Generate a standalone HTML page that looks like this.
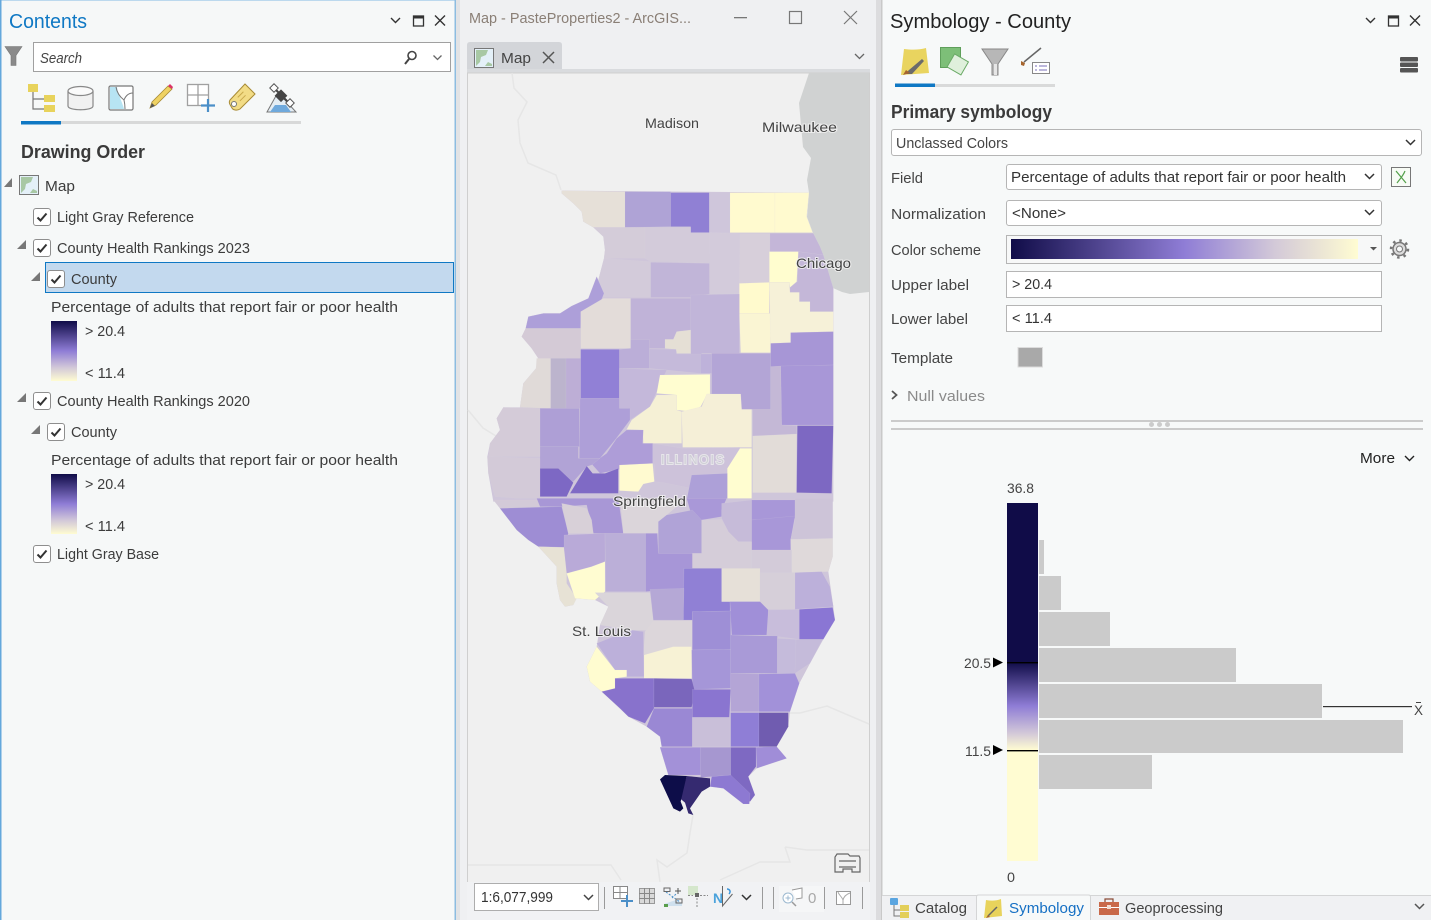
<!DOCTYPE html>
<html><head><meta charset="utf-8"><title>Symbology</title>
<style>
html,body{margin:0;padding:0;background:#f6f8f8;overflow:hidden}
svg{display:block}
text{font-family:"Liberation Sans",sans-serif;font-size:14.5px;fill:#444}
.t text,text.t{fill:#3c3c3c}
.m text{fill:#444;font-size:14px;paint-order:stroke;stroke:#f2f2f2;stroke-width:2px;stroke-opacity:.8}
.c polygon{stroke:#dcd9e2;stroke-width:1;stroke-opacity:.3}
</style></head><body>
<svg xmlns="http://www.w3.org/2000/svg" width="1431" height="920" viewBox="0 0 1431 920">
<defs>
<filter id="soft" x="-2%" y="-2%" width="104%" height="104%"><feGaussianBlur stdDeviation="1"/></filter>
<linearGradient id="lg" x1="0" y1="0" x2="0" y2="1"><stop offset="0" stop-color="#100c48"/><stop offset=".5" stop-color="#8f7dd6"/><stop offset=".78" stop-color="#d3c9d8"/><stop offset="1" stop-color="#fffcd2"/></linearGradient>
<linearGradient id="hg" x1="0" y1="0" x2="1" y2="0"><stop offset="0" stop-color="#100c48"/><stop offset=".5" stop-color="#8f7dd6"/><stop offset=".76" stop-color="#d3c9d8"/><stop offset="1" stop-color="#fffcd2"/></linearGradient>
<g id="cb"><rect x=".5" y=".5" width="17" height="17" rx="2.500" fill="#fff" stroke="#8e8e8e"/><path d="M4.500 9.500l3 3 6-7" fill="none" stroke="#333" stroke-width="2"/></g>
<g id="mapic"><rect x=".5" y=".5" width="19" height="19" fill="#e4f0f8" stroke="#777"/><path d="M2 2h12l-2 5-5 2-1 5-4 4z" fill="#a8c8a4"/><path d="M11 18l3-4 4 2v2z" fill="#a8c8a4"/></g>
</defs>

<!-- backgrounds -->
<rect width="1431" height="920" fill="#f6f8f8"/>
<rect x="456" y="0" width="425" height="920" fill="#eff0f2"/>
<rect x="456" width="4" height="920" fill="#e2e3e5"/>
<rect x="876" width="5" height="920" fill="#dcdcde"/>
<rect x="0" y="0" width="456" height="1" fill="#bcd9ee"/>
<rect x="0" y="0" width="1.500" height="920" fill="#64a8dc"/>
<rect x="454.500" y="0" width="1.500" height="920" fill="#8cbce0"/>

<!-- CONTENTS PANE -->
<text x="9" y="28" style="font-size:20px;fill:#0f78c4" textLength="78" lengthAdjust="spacingAndGlyphs">Contents</text>
<path d="M391 18l4.500 4.500 4.500-4.500" fill="none" stroke="#333" stroke-width="1.400"/>
<rect x="413.500" y="16" width="10" height="10" fill="none" stroke="#333" stroke-width="1.300"/><rect x="413" y="15.500" width="11" height="3" fill="#333"/>
<path d="M435 15.500l10 10M445 15.500l-10 10" stroke="#333" stroke-width="1.400"/>
<path d="M5 46.500h17l-6 9v10h-5v-10z" fill="#8a8a8a" stroke="#777" stroke-width=".6"/>
<rect x="33.500" y="42.500" width="417" height="29" fill="#fff" stroke="#a0a0a0"/>
<text x="40" y="63" style="font-size:15px;font-style:italic" textLength="42" lengthAdjust="spacingAndGlyphs">Search</text>
<circle cx="412" cy="55.500" r="4" fill="none" stroke="#444" stroke-width="1.600"/><path d="M409 59l-4 5" stroke="#444" stroke-width="2"/>
<path d="M433.500 55.500l4 4 4-4" fill="none" stroke="#666" stroke-width="1.300"/>
<!-- contents tab icons -->
<rect x="28" y="84" width="10" height="8" fill="#e8d35c"/><rect x="44" y="95" width="11" height="7" fill="#e8d35c"/><rect x="44" y="105" width="11" height="7" fill="#e8d35c"/>
<path d="M33 92v17h11M33 99h11" fill="none" stroke="#777" stroke-width="1.200"/>
<path d="M68 91v15c0 5 25 5 25 0V91" fill="#f1f1f1" stroke="#888" stroke-width="1.200"/><ellipse cx="80.500" cy="91" rx="12.500" ry="4.500" fill="#fafafa" stroke="#888" stroke-width="1.200"/>
<rect x="109" y="86" width="24" height="24" rx="1.500" fill="#fff" stroke="#777" stroke-width="1.200"/><path d="M110 87h7c1 8 5 14 7 22h-14z" fill="#b7e4f3"/><path d="M116 87c1 6 4 10 8 13 1 4 1 6 1 9M133 93c-4 0-7 2-9 7" fill="none" stroke="#777"/>
<path d="M150 108l2-6 16-16 4 3-16 16z" fill="#efd263" stroke="#a88b35" stroke-width=".8"/><path d="M168 86l4 3 1-2-3-3z" fill="#d36"/><path d="M150 108l2-5 3 3z" fill="#555"/>
<rect x="187.500" y="84.500" width="21" height="21" fill="#fff" stroke="#a0a0a0" stroke-width="1.300"/><path d="M198 85v20M188 95h20" stroke="#a0a0a0" stroke-width="1.300"/><path d="M208 99v13M201 105.500h14" stroke="#4b8fc8" stroke-width="2.200"/>
<path d="M230 100l15-16 10 10-15 15c-3 2-7 1-8-1s-4-5-2-8z" fill="#f2dc86" stroke="#a88b35"/><circle cx="234" cy="104" r="2.500" fill="#fff" stroke="#777"/><path d="M238 94l8 0M237 98l8 0" stroke="#c9a94c" transform="rotate(-45 242 96)"/>
<path d="M267 112l10-18 8 6 11 12z" fill="#e4edf4" stroke="#777"/><path d="M270 112l5-7h11l5 7z" fill="#6fa9dc"/><path d="M272 86l20 20" stroke="#444" stroke-width="2"/><rect x="277" y="91" width="9" height="9" fill="#444" transform="rotate(45 281 95)"/><rect x="271" y="85" width="6" height="6" fill="#fff" stroke="#555" transform="rotate(45 274 88)"/><rect x="287" y="100" width="6" height="6" fill="#fff" stroke="#555" transform="rotate(45 290 103)"/>
<rect x="21" y="121" width="280" height="3" fill="#d8d9d9"/><rect x="21" y="121" width="40" height="3.500" fill="#0f78c4"/>

<g class="t">
<text x="21" y="158" style="font-size:18px;font-weight:bold;fill:#3a3a3a" textLength="124" lengthAdjust="spacingAndGlyphs">Drawing Order</text>
<text x="45" y="191" textLength="30" lengthAdjust="spacingAndGlyphs">Map</text>
<text x="57" y="222" textLength="137" lengthAdjust="spacingAndGlyphs">Light Gray Reference</text>
<text x="57" y="253" textLength="193" lengthAdjust="spacingAndGlyphs">County Health Rankings 2023</text>
</g>
<path d="M12 178v9H4z" fill="#777"/>
<use href="#mapic" x="19" y="175"/>
<use href="#cb" x="33" y="208"/>
<path d="M26 240v9h-9z" fill="#777"/>
<use href="#cb" x="33" y="239"/>
<rect x="45.500" y="262.500" width="408" height="30" fill="#c3d9ee" stroke="#0f78c4"/>
<path d="M40 272v9h-9z" fill="#777"/>
<use href="#cb" x="47" y="270"/>
<g class="t">
<text x="71" y="284" textLength="46" lengthAdjust="spacingAndGlyphs">County</text>
<text x="51" y="312" textLength="347" lengthAdjust="spacingAndGlyphs">Percentage of adults that report fair or poor health</text>
<text x="85" y="336" textLength="40" lengthAdjust="spacingAndGlyphs">&gt; 20.4</text>
<text x="85" y="378" textLength="40" lengthAdjust="spacingAndGlyphs">&lt; 11.4</text>
<text x="57" y="406" textLength="193" lengthAdjust="spacingAndGlyphs">County Health Rankings 2020</text>
<text x="71" y="437" textLength="46" lengthAdjust="spacingAndGlyphs">County</text>
<text x="51" y="465" textLength="347" lengthAdjust="spacingAndGlyphs">Percentage of adults that report fair or poor health</text>
<text x="85" y="489" textLength="40" lengthAdjust="spacingAndGlyphs">&gt; 20.4</text>
<text x="85" y="531" textLength="40" lengthAdjust="spacingAndGlyphs">&lt; 11.4</text>
<text x="57" y="559" textLength="102" lengthAdjust="spacingAndGlyphs">Light Gray Base</text>
</g>
<rect x="51" y="321" width="26" height="60" fill="url(#lg)"/>
<rect x="51" y="474" width="26" height="60" fill="url(#lg)"/>
<path d="M26 393v9h-9z" fill="#777"/><use href="#cb" x="33" y="392"/>
<path d="M40 425v9h-9z" fill="#777"/><use href="#cb" x="47" y="423"/>
<use href="#cb" x="33" y="545"/>

<!-- MAP PANE HEADER -->
<text x="469" y="23" style="fill:#8a7f76" textLength="222" lengthAdjust="spacingAndGlyphs">Map - PasteProperties2 - ArcGIS...</text>
<rect x="734" y="17" width="13" height="1.300" fill="#777"/>
<rect x="789.500" y="11.500" width="12" height="12" fill="none" stroke="#777" stroke-width="1.200"/>
<path d="M844 11l13 13M857 11l-13 13" stroke="#777" stroke-width="1.200"/>
<path d="M467 45q0-3 3-3h89q3 0 3 3v24h-95z" fill="#d3d5d9"/>
<use href="#mapic" x="474" y="48"/>
<text x="501" y="63" style="font-size:15px" textLength="30" lengthAdjust="spacingAndGlyphs">Map</text>
<path d="M543 52l11 11M554 52l-11 11" stroke="#555" stroke-width="1.500"/>
<path d="M855 54l4.500 4.500 4.500-4.500" fill="none" stroke="#666" stroke-width="1.300"/>
<rect x="467" y="69" width="403" height="4" fill="#d9dbde"/>

<!-- MAP -->
<rect x="467.500" y="73" width="402" height="812" fill="#f0f0f0" stroke="#cfcfcf"/>
<polygon points="809,73 799,103 803,147 811,158 807,180 809,193 807,217 813,233 823,257 833,288 842,292 850,294 869,292 869,73" fill="#d0d2d2"/>
<g fill="none" stroke="#e6e6e6" stroke-width="1.500">
<path d="M512 73l2 15 13 14-9 18 2 23 8 20 28 12 5 15"/>
<path d="M468 410l15 18 13 8"/>
<path d="M693 815l-3 18-3 20-20 14-10-7 3 22"/>
<path d="M468 865h143l10 15M785 847l5 15-30 0-40 18"/><path d="M785 847l22 3h62"/>
<path d="M788 713h12l27-7 42 18"/>
</g>
<!-- counties -->
<g class="c" filter="url(#soft)" transform="translate(460,180) scale(.33333)">
<polygon fill="#cfc6da" style="stroke:none" points="305,32 1047,38 1040,110 1058,158 1090,225 1120,325 1120,965 100,965 85,880 82,830 90,790 120,750 110,715 130,682 180,682 190,610 228,565 235,535 215,505 185,470 197,445 205,410 250,400 300,400 335,378 385,355 410,290 415,300 432,235 435,210 430,170 400,142 370,125 365,95 340,70 305,40"/>
<polygon fill="#e6e0d8" points="305,32 495,35 495,142 400,142 370,125 365,95 340,70 305,40"/>
<polygon fill="#afa3d6" points="495,35 632,35 632,140 495,142"/>
<polygon fill="#9080d4" points="632,38 748,38 748,158 692,158 692,140 632,140"/>
<polygon fill="#cfc6db" points="748,38 810,38 810,158 748,158"/>
<polygon fill="#fffacf" points="810,38 945,38 945,158 810,158"/>
<polygon fill="#fffacf" points="945,38 1047,38 1040,110 1058,158 945,158"/>
<polygon fill="#d4ccd9" points="400,142 555,142 555,235 432,235 435,210 430,170"/>
<polygon fill="#d3cbda" points="555,142 692,142 692,158 748,158 748,250 625,245 572,245 555,235"/>
<polygon fill="#d3cbdb" points="748,158 840,160 838,342 750,342"/>
<polygon fill="#d7cfda" points="840,160 930,160 928,308 838,310"/>
<polygon fill="#c4b6d8" points="930,160 1060,160 1080,200 1090,225 1015,215 930,215"/>
<polygon fill="#c4b7d8" points="1015,215 1090,225 1120,325 1120,395 1050,395 1050,365 1018,365 1018,337 990,337 990,322 1012,305"/>
<polygon fill="#fffdcf" points="928,215 1015,215 1010,305 990,322 988,307 928,307"/>
<polygon fill="#d3cbda" points="432,235 572,245 572,352 430,352 415,300"/>
<polygon fill="#ad9fd9" points="410,290 432,340 420,370 365,395 362,445 197,445 205,410 250,400 300,400 335,378 385,355"/>
<polygon fill="#c1b5d8" points="572,247 748,250 748,342 692,352 572,352"/>
<polygon fill="#fffacd" points="838,310 928,307 928,400 838,400"/>
<polygon fill="#faf5d3" points="838,400 932,400 932,518 842,518"/>
<polygon fill="#f6f1d8" points="928,307 988,307 990,337 1018,337 1018,365 1050,365 1050,395 1120,395 1120,455 992,458 992,488 932,490"/>
<polygon fill="#e3dcd9" points="362,395 430,355 512,355 512,505 362,505"/>
<polygon fill="#d4cad6" points="185,470 197,445 362,445 362,535 235,535 215,505"/>
<polygon fill="#c0b3d8" points="512,355 692,355 692,450 650,455 640,478 615,478 615,505 568,505 568,478 512,478"/>
<polygon fill="#c1b5d9" points="692,345 838,342 838,520 755,520 725,520 725,580 692,520"/>
<polygon fill="#e5dfd5" points="640,478 650,455 692,450 692,520 650,520 648,508 615,505 615,478"/>
<polygon fill="#bbaed8" points="512,478 568,478 568,565 478,565 478,508 512,505"/>
<polygon fill="#c5bada" points="568,507 648,508 650,522 722,522 722,580 620,570 568,565"/>
<polygon fill="#beb2da" points="722,522 755,522 755,580 722,580"/>
<polygon fill="#b3a5d6" points="755,520 932,520 932,688 845,688 842,642 755,642"/>
<polygon fill="#a796d6" points="932,490 992,488 992,458 1120,455 1120,555 1000,558 932,560"/>
<polygon fill="#e0dad8" points="230,535 272,535 272,685 180,682 190,610 228,565"/>
<polygon fill="#bcb4cd" points="272,535 318,535 318,685 272,685"/>
<polygon fill="#bdaed6" points="318,535 362,535 362,685 318,685"/>
<polygon fill="#9180d6" points="362,508 478,508 478,655 362,655"/>
<polygon fill="#c4b8da" points="478,565 620,570 570,680 510,720 505,685 478,685"/>
<polygon fill="#f5f0d5" points="590,645 650,645 650,690 665,695 665,790 550,790 548,750 500,748 515,720 570,680"/>
<polygon fill="#fffdd0" points="600,585 750,583 750,642 742,642 722,680 695,695 650,690 650,645 590,640"/>
<polygon fill="#f5efd7" points="665,695 725,680 740,642 842,642 845,688 875,688 875,802 668,802"/>
<polygon fill="#a897d7" points="962,558 1120,555 1120,735 965,735"/>
<polygon fill="#c4b8d6" points="932,560 962,558 965,735 1010,737 1010,762 878,768 878,688 932,688"/>
<polygon fill="#7d68c2" points="1012,737 1120,737 1118,815 1115,940 1010,938"/>
<polygon fill="#e2dcd8" points="878,768 1010,762 1008,938 878,938"/>
<polygon fill="#cdc2da" points="578,790 668,805 840,802 815,865 802,865 802,880 695,885 695,925 610,908 585,905 585,855 578,850"/>
<polygon fill="#fffdd0" points="802,865 840,805 875,805 875,960 802,960"/>
<polygon fill="#ada0d8" points="695,885 802,880 802,960 680,960"/>
<polygon fill="#fffad0" points="478,855 578,850 583,905 550,912 535,935 478,932"/>
<polygon fill="#ae9dd8" points="550,750 548,790 578,790 578,850 478,855 478,868 420,880 395,852 440,820 470,775 500,750"/>
<polygon fill="#ae9fd8" points="360,655 478,655 478,685 510,685 510,720 465,780 420,835 358,835"/>
<polygon fill="#ae9fd6" points="240,685 358,685 358,800 240,800"/>
<polygon fill="#b1a3d6" points="240,800 355,800 355,835 420,835 395,855 380,860 340,905 330,905 295,865 240,865"/>
<polygon fill="#7d68c4" points="240,865 295,865 340,908 320,950 240,950"/>
<polygon fill="#7f6bc5" points="330,940 380,858 398,880 435,880 475,865 475,940"/>
<polygon fill="#d4cbd8" points="130,682 240,685 240,830 85,830 90,790 120,750 110,715"/>
<polygon fill="#d3cad8" points="82,830 240,835 240,960 105,950 85,880"/>
</g>
<g class="c" filter="url(#soft)" transform="translate(460,500) scale(.33333)">
<polygon fill="#cfc6da" style="stroke:none" points="100,-5 1118,-5 1118,170 1105,215 1120,320 1125,360 1090,418 1050,490 1018,550 990,635 985,680 950,740 980,775 890,805 865,830 885,885 870,905 850,912 790,865 750,860 750,835 680,828 615,825 625,825 600,742 605,740 600,710 560,680 505,650 425,575 390,545 380,500 410,440 420,375 445,320 405,300 345,295 340,315 315,320 300,300 290,250 290,200 235,140 205,120 170,90 120,25"/>
<polygon fill="#d3cad8" points="100,0 240,0 240,20 120,25"/>
<polygon fill="#9e8dd4" points="120,25 305,20 325,100 312,142 235,140 205,120 170,90"/>
<polygon fill="#a897d6" points="230,-5 475,-5 490,100 400,100 380,15 305,20 240,20"/>
<polygon fill="#d8d0d8" points="305,10 380,25 395,60 400,100 325,100"/>
<polygon fill="#dbd5da" points="480,-5 680,-5 620,45 595,65 595,100 490,100"/>
<polygon fill="#a998d8" points="680,-5 800,-5 785,30 785,50 725,60 697,55"/>
<polygon fill="#c6bbd9" points="785,10 875,0 875,125 835,125 805,95 785,55"/>
<polygon fill="#a897d8" points="875,0 1005,0 1005,55 875,60"/>
<polygon fill="#a897d8" points="875,60 1005,48 992,120 992,150 875,150"/>
<polygon fill="#cdc4d8" points="1005,-5 1118,-5 1118,115 992,118 1005,60"/>
<polygon fill="#dfd9da" points="992,118 1118,115 1118,170 1105,215 995,218"/>
<polygon fill="#d3cbd9" points="875,150 995,150 995,218 875,218"/>
<polygon fill="#b0a3d7" points="595,65 620,45 697,30 725,60 725,160 595,160"/>
<polygon fill="#d5cdd9" points="725,60 785,58 805,95 835,125 875,125 875,205 785,205 697,205 697,160 725,160"/>
<polygon fill="#e7e2d5" points="235,140 312,142 320,215 320,250 350,295 340,315 315,320 300,300 290,250 290,200"/>
<polygon fill="#b9aad8" points="312,105 435,100 435,185 395,200 395,225 320,220 312,145"/>
<polygon fill="#fffcd1" points="320,220 395,200 435,185 435,275 405,300 345,295"/>
<polygon fill="#bbafd8" points="435,100 557,100 557,275 437,275"/>
<polygon fill="#a796d7" points="557,100 592,100 595,160 697,160 697,205 672,205 672,265 557,275"/>
<polygon fill="#9080d5" points="672,205 785,205 785,305 810,305 810,333 697,335 697,360 670,360"/>
<polygon fill="#e6e0d8" points="785,205 900,205 900,305 785,305"/>
<polygon fill="#d6cfd9" points="900,218 1005,218 1005,328 900,328"/>
<polygon fill="#bcb0da" points="1005,218 1085,215 1110,260 1120,320 1005,328"/>
<polygon fill="#dad5da" points="405,278 570,278 580,360 580,392 515,390 420,375 445,320"/>
<polygon fill="#b5a8d6" points="570,268 672,265 670,360 580,360"/>
<polygon fill="#a08fd8" points="810,305 900,305 925,330 925,405 815,405"/>
<polygon fill="#c8bddb" points="925,330 1018,328 1018,418 920,405"/>
<polygon fill="#8a76d4" points="1018,328 1118,322 1125,360 1090,418 1018,418"/>
<polygon fill="#dcd6da" points="580,362 697,362 697,440 550,465 555,395"/>
<polygon fill="#9e8fd6" points="697,335 812,333 812,448 697,450"/>
<polygon fill="#a99ad7" points="812,405 952,408 952,520 812,520"/>
<polygon fill="#c5bbdb" points="952,415 1008,418 1008,520 952,520"/>
<polygon fill="#c5bbda" points="1008,418 1088,418 1050,490 1005,520"/>
<polygon fill="#bcb0da" points="410,430 510,390 550,395 552,530 500,530 500,510 465,510"/>
<polygon fill="#fffcd0" points="380,500 410,440 465,510 500,510 500,530 465,535 465,565 425,575 390,545"/>
<polygon fill="#f7f2d5" points="552,465 640,440 695,440 695,535 552,535"/>
<polygon fill="#a596d8" points="695,450 812,448 812,565 697,568"/>
<polygon fill="#b4a5d6" points="812,520 897,522 897,635 812,635"/>
<polygon fill="#a291d9" points="897,522 1005,520 1018,550 990,635 897,635"/>
<polygon fill="#8872cc" points="465,535 582,535 582,625 555,670 505,650 480,625 425,575 465,565"/>
<polygon fill="#7a66bc" points="582,535 695,537 705,575 695,622 582,622"/>
<polygon fill="#8a75d0" points="697,568 812,568 808,652 697,652"/>
<polygon fill="#9a88d4" points="582,625 697,625 697,740 605,740 600,710 560,680"/>
<polygon fill="#c9bfd9" points="697,652 810,652 810,740 697,740"/>
<polygon fill="#8f7ed6" points="812,638 897,638 897,740 812,740"/>
<polygon fill="#6f5bb0" points="897,638 985,638 985,680 950,740 897,740"/>
<polygon fill="#a391d8" points="600,742 722,742 722,825 625,825"/>
<polygon fill="#a697d0" points="722,742 812,742 812,825 755,830 722,832"/>
<polygon fill="#7e69c2" points="812,742 888,742 888,800 865,830 885,885 870,905 812,825"/>
<polygon fill="#a08dd8" points="888,742 950,740 980,775 890,805"/>
<polygon fill="#8d79d2" points="755,830 812,825 870,880 868,912 850,912 790,865 750,860"/>
<polygon fill="#34296f" style="stroke:none" points="680,828 750,835 750,860 725,875 690,925 700,945 685,940 675,908 660,895"/>
<polygon fill="#100c48" style="stroke:none" points="600,838 615,825 680,828 662,905 670,925 660,935 640,925 610,860"/>
</g>
<g class="m">
<text x="645" y="128" textLength="54" lengthAdjust="spacingAndGlyphs">Madison</text>
<text x="762" y="132" textLength="75" lengthAdjust="spacingAndGlyphs">Milwaukee</text>
<text x="796" y="268" textLength="55" lengthAdjust="spacingAndGlyphs">Chicago</text>
<text x="613" y="506" textLength="73" lengthAdjust="spacingAndGlyphs">Springfield</text>
<text x="572" y="636" textLength="59" lengthAdjust="spacingAndGlyphs">St. Louis</text>
<text x="661" y="464" style="font-size:12.500px;fill:#cfcfd6;stroke:#eeeeee" textLength="63" lengthAdjust="spacing">ILLINOIS</text>
</g>
<path d="M835 872v-15l2-3h11l2 2h9l1 2v14h-8v-3h-9v3z" fill="none" stroke="#666" stroke-width="1.200"/><path d="M839 861h17M839 867h17" stroke="#666" stroke-width="1.200"/>

<!-- map toolbar -->
<rect x="467" y="882" width="403" height="38" fill="#f1f2f4"/>
<rect x="474.500" y="883.500" width="124" height="27" fill="#fff" stroke="#adadad"/>
<text x="481" y="902" style="fill:#333;font-size:15px" textLength="72" lengthAdjust="spacingAndGlyphs">1:6,077,999</text>
<path d="M584 895l4.500 4.500 4.500-4.500" fill="none" stroke="#444" stroke-width="1.500"/>
<path d="M604.500 887v22M762.500 887v22M773.500 887v22M824.500 887v22M862.500 887v22" stroke="#9a9a9a"/>
<rect x="613.500" y="886.500" width="14" height="12" fill="#fff" stroke="#888"/><path d="M620 887v12M614 892.500h14" stroke="#888"/><path d="M627 895v12M621 901h12" stroke="#4b8fc8" stroke-width="2"/>
<rect x="639.500" y="888.500" width="15" height="15" fill="#d9d9d9" stroke="#999"/><path d="M644.500 888v16M649.500 888v16M639 893.500h16M639 898.500h16" stroke="#888"/>
<path d="M664 906h18v-3l-6-3-12 4z" fill="#cfe0ee"/><rect x="664" y="904" width="4" height="3" fill="#5a9e4b"/><path d="M666 892l14 10M672 898l4-4" stroke="#4b8fc8" stroke-dasharray="2 1.500"/><rect x="664" y="888" width="6" height="3.500" fill="none" stroke="#666"/><rect x="676" y="899" width="6" height="4" fill="none" stroke="#666"/><path d="M678 888v6M675 891h6" stroke="#555"/>
<rect x="688" y="886" width="10" height="9" fill="#d5e7cc"/><rect x="695" y="893" width="4" height="4" fill="#666"/><path d="M697 898v10M688 895.500h5M700 895.500h8" stroke="#888" stroke-dasharray="2 1.500"/>
<text x="713" y="903" style="font-size:14px;font-weight:bold;fill:#4ba3dc" textLength="10">N</text><path d="M722.500 886v20l10-12" fill="none" stroke="#666"/><path d="M727 889c3 0 4 3 2 5" fill="none" stroke="#3a94d8" stroke-width="1.500"/>
<path d="M742 895l4.500 4.500 4.500-4.500" fill="none" stroke="#333" stroke-width="1.500"/>
<rect x="779" y="886" width="45" height="26" fill="#f5f6f7"/>
<circle cx="788" cy="898" r="5" fill="#fff" stroke="#9cb9d0"/><path d="M785.500 898h5M788 895.500v5" stroke="#9cb9d0"/><path d="M792 902l4 4" stroke="#9a9a9a" stroke-width="1.500"/><path d="M792 890l10-2v10l-6 1" fill="#fff" stroke="#999"/>
<text x="808" y="903" style="fill:#a8a8a8;font-size:15px" textLength="8">0</text>
<rect x="836.500" y="891.500" width="14" height="13" fill="#fff" stroke="#999"/><path d="M838 892c1 3 4 5 5 8v4M850 893c-3 1-6 3-7 7" fill="none" stroke="#aaa"/>

<!-- SYMBOLOGY PANE -->
<rect x="881" width="550" height="895" fill="#f7f9f9"/>
<rect x="881" width="1.500" height="920" fill="#c9c9c9"/>
<text x="890" y="28" style="font-size:20px;fill:#222" textLength="181" lengthAdjust="spacingAndGlyphs">Symbology - County</text>
<path d="M1366 18l4.500 4.500 4.500-4.500" fill="none" stroke="#333" stroke-width="1.400"/>
<rect x="1388.500" y="16" width="10" height="10" fill="none" stroke="#333" stroke-width="1.300"/><rect x="1388" y="15.500" width="11" height="3" fill="#333"/>
<path d="M1410 15.500l10 10M1420 15.500l-10 10" stroke="#333" stroke-width="1.400"/>
<!-- sym tab icons -->
<path d="M904 49c8 1 15 1 22-1l3 25-28 2z" fill="#e9d45f"/><path d="M905 74l4-4 13-11 2 2-12 13z" fill="#6b6b6b"/><path d="M903 75l3-5 4 3z" fill="#a6652e"/>
<rect x="940.500" y="47.500" width="20" height="20" fill="#7dbf78" stroke="#5f9f5b"/><rect x="950" y="57" width="16" height="15" fill="#dff0dc" stroke="#6aaa66" transform="rotate(30 958 64)"/>
<path d="M982 49h26l-10 15v11h-6V64z" fill="#b7b7b7" stroke="#888" stroke-width="1"/><path d="M994 64v11h3V64z" fill="#e6e6e6"/>
<path d="M1021 61l4 2-1 3-3-1z" fill="#a6652e"/><path d="M1024 62l17-14" stroke="#666" stroke-width="1.500"/>
<rect x="1032.500" y="62.500" width="17" height="11" fill="#fff" stroke="#888"/><path d="M1035 66h2M1039 66h8M1035 70h2M1039 70h8" stroke="#7a6fb8"/>
<rect x="895" y="84" width="160" height="3" fill="#d9dada"/><rect x="895" y="83.500" width="40" height="3.500" fill="#0f78c4"/>
<rect x="1400" y="57" width="18" height="4.500" rx="1" fill="#555"/><rect x="1400" y="62.500" width="18" height="4.500" rx="1" fill="#555"/><rect x="1400" y="68" width="18" height="4.500" rx="1" fill="#555"/>
<text x="891" y="118" style="font-size:18px;font-weight:bold;fill:#3a3a3a" textLength="161" lengthAdjust="spacingAndGlyphs">Primary symbology</text>
<rect x="891.500" y="129.500" width="530" height="26" rx="2.500" fill="#fff" stroke="#b5b5b5"/>
<text x="896" y="148" textLength="112" lengthAdjust="spacingAndGlyphs">Unclassed Colors</text>
<path d="M1406 140l4.500 4.500 4.500-4.500" fill="none" stroke="#333" stroke-width="1.500"/>
<text x="891" y="183" textLength="32" lengthAdjust="spacingAndGlyphs">Field</text>
<rect x="1006.500" y="164.500" width="375" height="25" rx="2.500" fill="#fff" stroke="#b5b5b5"/>
<text x="1011" y="182" style="fill:#333" textLength="335" lengthAdjust="spacingAndGlyphs">Percentage of adults that report fair or poor health</text>
<path d="M1365 174l4.500 4.500 4.500-4.500" fill="none" stroke="#333" stroke-width="1.500"/>
<rect x="1391.500" y="167.500" width="19" height="19" fill="#f7fbf5" stroke="#777"/><path d="M1396 171l10 12M1405 171c-2 5-5 8-8 12" fill="none" stroke="#53a04a" stroke-width="1.200"/>
<text x="891" y="219" textLength="95" lengthAdjust="spacingAndGlyphs">Normalization</text>
<rect x="1006.500" y="200.500" width="375" height="25" rx="2.500" fill="#fff" stroke="#b5b5b5"/>
<text x="1012" y="218" style="fill:#333" textLength="54" lengthAdjust="spacingAndGlyphs">&lt;None&gt;</text>
<path d="M1365 210l4.500 4.500 4.500-4.500" fill="none" stroke="#333" stroke-width="1.500"/>
<text x="891" y="255" textLength="90" lengthAdjust="spacingAndGlyphs">Color scheme</text>
<rect x="1006.500" y="235.500" width="375" height="28" fill="#f7f8f8" stroke="#b5b5b5"/>
<rect x="1011" y="239" width="347" height="20" fill="url(#hg)"/>
<path d="M1370 247h7l-3.500 3.500z" fill="#555"/>
<circle cx="1399.500" cy="249" r="6.500" fill="#ddd" stroke="#777" stroke-width="1.500"/><circle cx="1399.500" cy="249" r="8.500" fill="none" stroke="#777" stroke-width="2.500" stroke-dasharray="2.500 4.100"/><circle cx="1399.500" cy="249" r="3" fill="#f7f9f9" stroke="#777"/>
<text x="891" y="290" textLength="78" lengthAdjust="spacingAndGlyphs">Upper label</text>
<rect x="1006.500" y="271.500" width="375" height="26" fill="#fff" stroke="#b5b5b5"/>
<text x="1012" y="289" style="fill:#333" textLength="40" lengthAdjust="spacingAndGlyphs">&gt; 20.4</text>
<text x="891" y="324" textLength="77" lengthAdjust="spacingAndGlyphs">Lower label</text>
<rect x="1006.500" y="305.500" width="375" height="26" fill="#fff" stroke="#b5b5b5"/>
<text x="1012" y="323" style="fill:#333" textLength="40" lengthAdjust="spacingAndGlyphs">&lt; 11.4</text>
<text x="891" y="363" textLength="62" lengthAdjust="spacingAndGlyphs">Template</text>
<rect x="1018" y="347.500" width="24.500" height="19.500" fill="#a9a9a9" stroke="#dcdcdc"/>
<path d="M892 391l4.500 4-4.500 4" fill="none" stroke="#555" stroke-width="1.800"/>
<text x="907" y="401" style="fill:#8a8a8a" textLength="78" lengthAdjust="spacingAndGlyphs">Null values</text>
<rect x="891" y="420" width="532" height="2" fill="#cbcbcb"/><rect x="891" y="428" width="532" height="2" fill="#cbcbcb"/>
<circle cx="1151.500" cy="424.500" r="2.500" fill="#cbcbcb"/><circle cx="1159.500" cy="424.500" r="2.500" fill="#cbcbcb"/><circle cx="1167.500" cy="424.500" r="2.500" fill="#cbcbcb"/>
<text x="1360" y="463" style="fill:#222" textLength="35" lengthAdjust="spacingAndGlyphs">More</text>
<path d="M1405 456l4.500 4.500 4.500-4.500" fill="none" stroke="#222" stroke-width="1.400"/>
<text x="1007" y="493" style="font-size:14px" textLength="27" lengthAdjust="spacingAndGlyphs">36.8</text>
<linearGradient id="cbar" x1="0" y1="662" x2="0" y2="750" gradientUnits="userSpaceOnUse"><stop offset="0" stop-color="#100c48"/><stop offset=".5" stop-color="#8f7dd6"/><stop offset=".82" stop-color="#d5cbd8"/><stop offset="1" stop-color="#fffcd2"/></linearGradient>
<rect x="1007" y="503" width="31" height="358" fill="url(#cbar)"/>
<rect x="1007" y="662" width="31" height="1.400" fill="#000"/><rect x="1007" y="750" width="31" height="1.400" fill="#000"/>
<path d="M993 657.500l10 5-10 5zM993 745l10 5-10 5z" fill="#000"/>
<text x="964" y="668" style="font-size:14px" textLength="27" lengthAdjust="spacingAndGlyphs">20.5</text>
<text x="965" y="756" style="font-size:14px" textLength="26" lengthAdjust="spacingAndGlyphs">11.5</text>
<text x="1007" y="882" style="font-size:14px" textLength="8" lengthAdjust="spacingAndGlyphs">0</text>
<g fill="#cbcbcb">
<rect x="1039" y="540" width="5" height="34"/><rect x="1039" y="576" width="22" height="34"/><rect x="1039" y="612" width="71" height="34"/><rect x="1039" y="648" width="197" height="34"/><rect x="1039" y="684" width="283" height="34"/><rect x="1039" y="720" width="364" height="33"/><rect x="1039" y="755" width="113" height="34"/>
</g>
<rect x="1323" y="706" width="89" height="1.200" fill="#333"/>
<text x="1414" y="715" style="font-size:14px" textLength="9" lengthAdjust="spacingAndGlyphs">X</text><rect x="1416" y="702" width="5" height="1" fill="#444"/>

<!-- bottom tabs -->
<rect x="882" y="895" width="549" height="25" fill="#f0f1f3"/>
<rect x="882" y="895" width="549" height="1" fill="#d4d5d6"/>
<path d="M976.500 920v-23q0-2 2-2h110q2 0 2 2v23" fill="#f7f9f9" stroke="#d4d5d6"/>
<rect x="890" y="898" width="8" height="7" rx="1" fill="#5aa5e0"/>
<path d="M894 905v11h6M894 910h6" fill="none" stroke="#777"/>
<rect x="900" y="905" width="9" height="6" fill="#e3cf5a"/><rect x="900" y="912" width="9" height="6" fill="#e3cf5a"/>
<text x="915" y="913" textLength="52" lengthAdjust="spacingAndGlyphs">Catalog</text>
<path d="M986 900c5 1 10 1 15-1l1 17-18 2z" fill="#e8d35c"/><path d="M988 916l9-9" stroke="#666" stroke-width="1.500"/><path d="M986 918l2-3 2 2z" fill="#a6652e"/>
<text x="1009" y="913" style="fill:#1670c4" textLength="75" lengthAdjust="spacingAndGlyphs">Symbology</text>
<rect x="1099" y="902" width="20" height="13" fill="#c9694a"/><path d="M1105 902v-3h8v3" fill="none" stroke="#8a4a34" stroke-width="1.200"/><rect x="1099" y="907" width="20" height="1" fill="#fff"/><rect x="1107" y="905" width="4" height="4" fill="#f3ddd2"/>
<text x="1125" y="913" textLength="98" lengthAdjust="spacingAndGlyphs">Geoprocessing</text>
<path d="M1415 904l4.500 4.500 4.500-4.500" fill="none" stroke="#555" stroke-width="1.500"/>
</svg>
</body></html>
